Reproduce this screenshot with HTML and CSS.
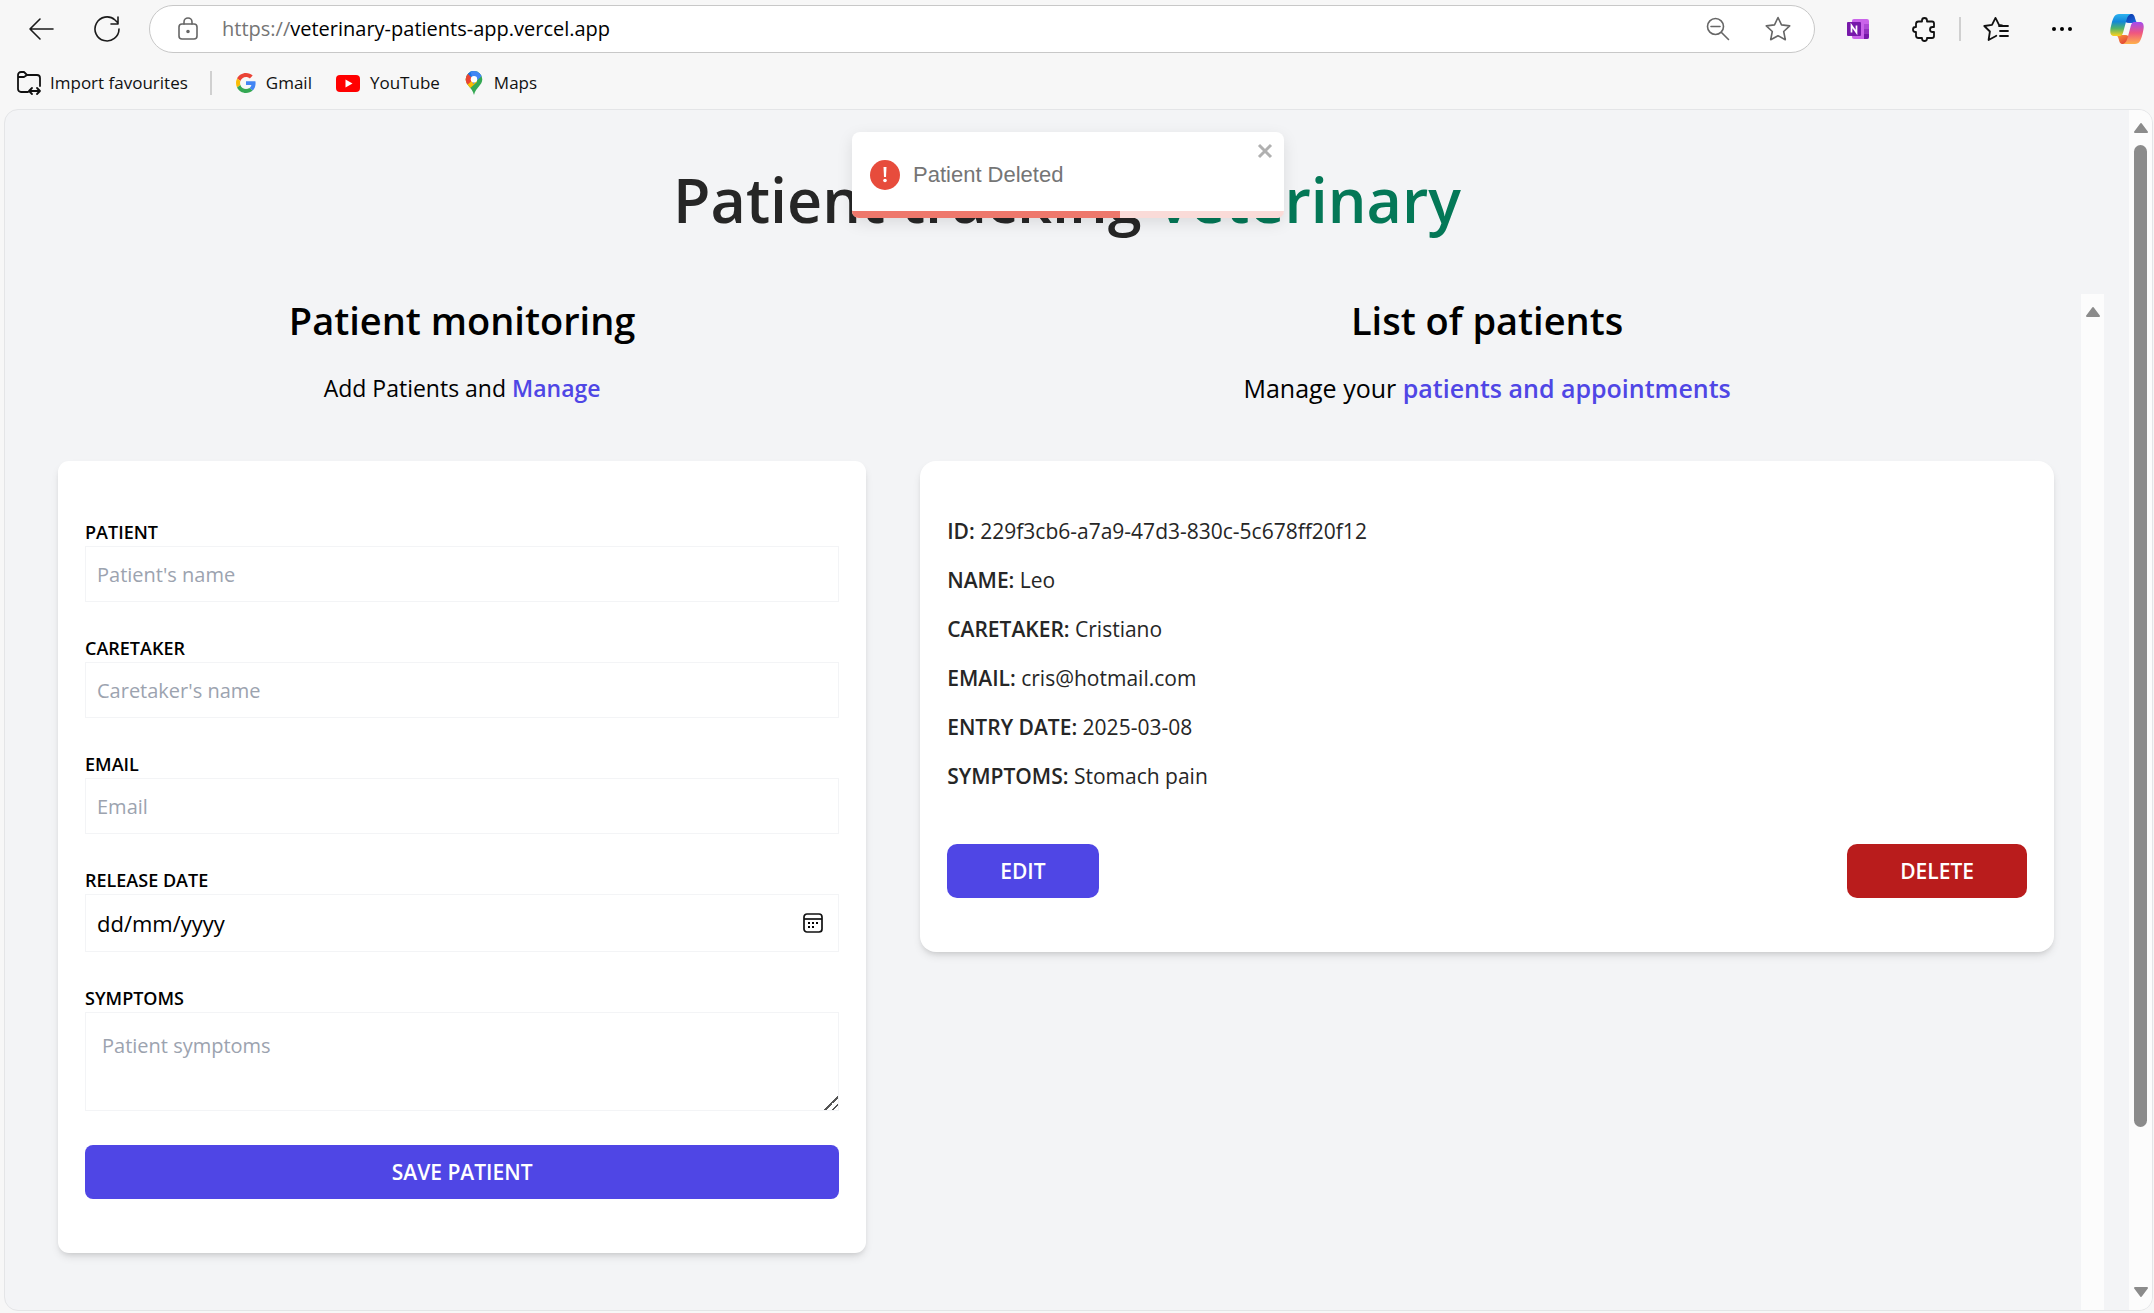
FILE: index.html
```html
<!DOCTYPE html>
<html lang="en-GB">
<head>
<meta charset="utf-8">
<title>Veterinary patients</title>
<link rel="stylesheet" href="styles.css">
</head>
<body>
<div class="browser">
  <header class="chrome">
    <div class="toolbar">
      <button class="icon-btn" aria-label="Back"><svg width="28" height="28" viewBox="0 0 28 28" class="line"><path d="M26 14H3M13 4L3 14l10 10"/></svg></button>
      <button class="icon-btn" aria-label="Refresh"><svg width="28" height="28" viewBox="0 0 28 28" class="line"><path d="M26 14a12 12 0 1 1-4-9l3 3M25 2v7h-7"/></svg></button>
      <div class="address">
        <svg width="24" height="26" viewBox="0 0 24 26" class="line muted"><rect x="3" y="8" width="18" height="15" rx="3"/><path d="M8 8V6a4 4 0 0 1 8 0v2"/><circle cx="12" cy="15.500" r="1" fill="#666"/></svg>
        <div class="url"><span class="scheme">https://</span>veterinary-patients-app.vercel.app</div>
        <button class="icon-btn" aria-label="Zoom out"><svg width="28" height="28" viewBox="0 0 28 28" class="line muted"><circle cx="11.500" cy="11.500" r="8"/><path d="M7 11.500h9M17.500 17.500l7 7"/></svg></button>
        <button class="icon-btn" aria-label="Add to favourites"><svg width="28" height="28" viewBox="0 0 28 28" class="line muted"><path d="M14 2.500l3.500 7.400 8.200 1-6 5.600 1.600 8.200L14 20.700l-7.300 4 1.600-8.200-6-5.600 8.200-1z"/></svg></button>
      </div>
      <div class="tools">
        <button class="icon-btn" aria-label="OneNote"><svg width="28" height="28" viewBox="0 0 28 28"><rect x="8" y="4" width="17" height="20" rx="2" fill="#ca64ea"/><path d="M20 9h5v5h-5z" fill="#ae4bd5"/><path d="M20 14h5v5h-5z" fill="#9332bf"/><path d="M20 19h5v3a2 2 0 0 1-2 2h-3z" fill="#7719aa"/><rect x="3" y="7" width="14" height="14" rx="1" fill="#7719aa"/><path d="M7.500 17.500v-7l5 7v-7" fill="none" stroke="#fff" stroke-width="1.700"/></svg></button>
        <button class="icon-btn" aria-label="Extensions"><svg width="28" height="28" viewBox="0 0 28 28" class="line bold"><path d="M6 9a2.500 2.500 0 0 1 2.500-2.500H12V5.500a2.500 2.500 0 0 1 5 0v1h5a2 2 0 0 1 2 2V12h-1.500a2.500 2.500 0 0 0 0 5H24v4a2 2 0 0 1-2 2h-5v.5a2.500 2.500 0 0 1-5 0V23H8.500A2.500 2.500 0 0 1 6 20.500V17h-.5a2.500 2.500 0 0 1 0-5H6z"/></svg></button>
        <span class="divider"></span>
        <button class="icon-btn" aria-label="Favourites"><svg width="28" height="28" viewBox="0 0 28 28" class="line bold"><path d="M20 10.500l-3-.6-3.500-7-3.500 7-7.700 1.100 5.600 5.500L6.600 25l6.900-3.700.8-.5M17 11h9M18 16h8M18 21h8"/></svg></button>
        <button class="icon-btn" aria-label="Settings and more"><svg width="28" height="28" viewBox="0 0 28 28"><circle cx="6" cy="14" r="2"/><circle cx="14" cy="14" r="2"/><circle cx="22" cy="14" r="2"/></svg></button>
        <button class="icon-btn copilot" aria-label="Copilot"><svg width="34" height="30" viewBox="0 0 34 30">
          <defs>
            <linearGradient id="cool" x1="0" y1="0" x2="0" y2="1"><stop offset="0" stop-color="#2bb2f0"/><stop offset=".35" stop-color="#1287d8"/><stop offset=".65" stop-color="#4fb26a"/><stop offset="1" stop-color="#ffd21c"/></linearGradient>
            <linearGradient id="warm" x1="0" y1="0" x2="0" y2="1"><stop offset="0" stop-color="#a24cf0"/><stop offset=".5" stop-color="#f0567f"/><stop offset="1" stop-color="#ffb24a"/></linearGradient>
            <linearGradient id="deep" x1="0" y1="0" x2="1" y2="1"><stop offset="0" stop-color="#0a2f9e"/><stop offset="1" stop-color="#1c6fe8"/></linearGradient>
            <linearGradient id="hot" x1="0" y1="0" x2="1" y2="1"><stop offset="0" stop-color="#ff9b3c"/><stop offset="1" stop-color="#d92c33"/></linearGradient>
          </defs>
          <path d="M14 0h7c3 0 3.500 2 4.300 5 .7 2.500 1.400 4 3.500 4H19c-3 0-5-2-6-5z" fill="url(#deep)"/>
          <path d="M20 30h-7c-3 0-3.500-2-4.300-5-.7-2.500-1.400-3.500-3.500-4H15c3 0 5 2 6 5z" fill="url(#hot)"/>
          <path d="M22 0H9C4.500 0 3 4 1.500 10 .3 15-1.500 22 4.500 22H9c3 0 3.800-2 4.500-5l3-11C17.500 2.500 19 0 22 0z" fill="url(#cool)"/>
          <path d="M12 30h13c4.500 0 6-4 7.500-10 1.200-5 3-12-3-12H25c-3 0-3.800 2-4.500 5l-3 11c-1 3.500-2.500 6-5.500 6z" fill="url(#warm)"/>
        </svg></button>
      </div>
    </div>
    <nav class="bookmarks">
      <a href="#" class="import"><svg width="26" height="26" viewBox="0 0 26 26" class="line bold"><path d="M12 22H5a3 3 0 0 1-3-3V5a3 3 0 0 1 3-3h3l3 3h10a3 3 0 0 1 3 3v8M2 7h6l3-2M13 21h11M16 18l-3 3 3 3M21 18l3 3-3 3"/></svg>Import favourites</a>
      <span class="divider"></span>
      <a href="#"><svg width="20" height="24" viewBox="0 0 48 48"><path fill="#ea4335" d="M24 9.500c3.540 0 6.710 1.220 9.210 3.600l6.850-6.850C35.900 2.380 30.470 0 24 0 14.620 0 6.510 5.380 2.560 13.220l7.980 6.190C12.430 13.720 17.740 9.500 24 9.500z"/><path fill="#4285f4" d="M46.980 24.550c0-1.570-.15-3.090-.38-4.550H24v9.020h12.940c-.58 2.960-2.260 5.480-4.780 7.180l7.730 6c4.510-4.180 7.090-10.360 7.090-17.650z"/><path fill="#fbbc05" d="M10.530 28.590A14.500 14.500 0 0 1 9.770 24c0-1.600.27-3.140.76-4.590l-7.980-6.190A23.900 23.900 0 0 0 0 24c0 3.880.92 7.540 2.560 10.780z"/><path fill="#34a853" d="M24 48c6.480 0 11.930-2.130 15.890-5.810l-7.730-6c-2.150 1.450-4.920 2.300-8.160 2.300-6.260 0-11.570-4.220-13.470-9.910l-7.980 6.190C6.510 42.620 14.620 48 24 48z"/></svg>Gmail</a>
      <a href="#"><svg width="24" height="18" viewBox="0 0 24 18"><rect width="24" height="17" y="1" rx="4" fill="#f00"/><path d="M9.500 5.500v8l7-4z" fill="#fff"/></svg>YouTube</a>
      <a href="#"><svg width="20" height="26" viewBox="0 0 20 26"><clipPath id="pin"><path d="M10 1a8.300 8.300 0 0 1 8.300 8.300c0 6-6.300 8-8.300 15.700C8 17.300 1.700 15.300 1.700 9.300A8.300 8.300 0 0 1 10 1z"/></clipPath><g clip-path="url(#pin)"><path fill="#34a853" d="M0 0h20v26H0z"/><path fill="#fbbc04" d="M0 8l10-2 3 6-9 8H0z"/><path fill="#ea4335" d="M0 3l4 0 6 6-7 6H0z"/><path fill="#1a73e8" d="M3 0h8l-2 9-6-6z"/><path fill="#4285f4" d="M6 0h14v4L9 14 8 7z"/></g><circle cx="10" cy="9.300" r="3.200" fill="#fff"/></svg>Maps</a>
    </nav>
  </header>

  <div class="viewport">
    <main class="page">
      <h1>Patient tracking <span>veterinary</span></h1>
      <div class="columns">
        <section class="monitor">
          <h2>Patient monitoring</h2>
          <p class="lead">Add Patients and <b>Manage</b></p>
          <form class="card form">
            <div class="field"><label for="patient">PATIENT</label><input id="patient" type="text" placeholder="Patient's name"></div>
            <div class="field"><label for="caretaker">CARETAKER</label><input id="caretaker" type="text" placeholder="Caretaker's name"></div>
            <div class="field"><label for="email">EMAIL</label><input id="email" type="email" placeholder="Email"></div>
            <div class="field"><label for="date">RELEASE DATE</label>
              <div class="date"><input id="date" type="text" placeholder="dd/mm/yyyy"><button type="button" class="icon-btn" aria-label="Open calendar"><svg width="20" height="20" viewBox="0 0 20 20"><rect x="1" y="1" width="18" height="18" rx="3" fill="none" stroke="#111" stroke-width="1.700"/><path d="M1 6h18" stroke="#111" stroke-width="1.700"/><path d="M5 9h2v2H5zM9 9h2v2H9zM13 9h2v2h-2zM5 13h2v2H5zM9 13h2v2H9z"/></svg></button></div>
            </div>
            <div class="field"><label for="symptoms">SYMPTOMS</label><textarea id="symptoms" placeholder="Patient symptoms"></textarea></div>
            <button type="button" class="btn save">SAVE PATIENT</button>
          </form>
        </section>
        <section class="list">
          <div class="list-body">
            <h2>List of patients</h2>
            <p class="lead large">Manage your <b>patients and appointments</b></p>
            <article class="card patient">
              <dl>
                <div><dt>ID:</dt> <dd>229f3cb6-a7a9-47d3-830c-5c678ff20f12</dd></div>
                <div><dt>NAME:</dt> <dd>Leo</dd></div>
                <div><dt>CARETAKER:</dt> <dd>Cristiano</dd></div>
                <div><dt>EMAIL:</dt> <dd>cris@hotmail.com</dd></div>
                <div><dt>ENTRY DATE:</dt> <dd>2025-03-08</dd></div>
                <div><dt>SYMPTOMS:</dt> <dd>Stomach pain</dd></div>
              </dl>
              <div class="actions">
                <button type="button" class="btn">EDIT</button>
                <button type="button" class="btn danger">DELETE</button>
              </div>
            </article>
          </div>
          <div class="scrollbar" aria-hidden="true"><svg width="16" height="12" viewBox="0 0 16 12"><path d="M8 2l6 8H2z"/></svg></div>
        </section>
      </div>
    </main>
    <div class="scrollbar" aria-hidden="true">
      <svg width="16" height="12" viewBox="0 0 16 12"><path d="M8 2l6 8H2z"/></svg>
      <div class="track"><div class="thumb"></div></div>
      <svg width="16" height="12" viewBox="0 0 16 12"><path d="M8 10L2 2h12z"/></svg>
    </div>
    <div class="toast" role="alert">
      <svg width="30" height="30" viewBox="0 0 30 30"><circle cx="15" cy="15" r="15" fill="#e74c3c"/><path d="M13.500 7h3l-.5 10h-2z" fill="#fff"/><circle cx="15" cy="20.500" r="1.800" fill="#fff"/></svg>
      <span>Patient Deleted</span>
      <button class="icon-btn close" aria-label="Close"><svg width="16" height="16" viewBox="0 0 16 16"><path d="M2 2l12 12M14 2L2 14" stroke="#b0b0b0" stroke-width="3"/></svg></button>
      <div class="progress"><div class="bar" style="width:62%"></div></div>
    </div>
  </div>
</div>
</body>
</html>
```
FILE: styles.css
```css
* { box-sizing: border-box; margin: 0; }

body { font-family: "Open Sans", "Noto Sans", sans-serif; color: #000; background: #f7f7f7; }

button, input, textarea { font: inherit; color: inherit; }

svg { display: block; flex: none; }

.browser { display: flex; flex-direction: column; height: 100vh; padding: 0 1px 2px 4px; }

.icon-btn { display: flex; padding: 0; border: 0; background: none; }

.line { fill: none; stroke: #1b1b1b; stroke-width: 1.6; stroke-linecap: round; stroke-linejoin: round; }
.line.bold { stroke-width: 1.8; stroke: #111; }
.line.muted { stroke: #666; }

.divider { width: 2px; height: 24px; background: #d0d0d0; }

/* Browser bars */
.toolbar { display: flex; align-items: center; height: 58px; padding: 0 9px 0 23px; gap: 38px; }
.address {
  flex: 1; display: flex; align-items: center; height: 48px; gap: 32px;
  margin-left: -10px; padding: 0 22px 0 26px;
  border: 1px solid #c8c8c8; border-radius: 24px; background: #fff;
}
.url { flex: 1; margin-left: -10px; font-size: 20px; line-height: 28px; }
.scheme { color: #757575; }
.tools { display: flex; align-items: center; gap: 38px; margin-left: -9px; }
.tools .divider { margin: 0 -17px; }
.copilot { margin-left: -4px; }
.bookmarks { display: flex; align-items: center; height: 51px; padding: 0 12px 2px; gap: 24px; }
.bookmarks a { display: flex; align-items: center; gap: 10px; font-size: 17px; line-height: 24px; color: #111; text-decoration: none; }
.bookmarks .import { gap: 8px; margin-right: -2px; }

/* Page frame */
.viewport {
  position: relative; flex: 1; min-height: 0; display: flex; overflow: hidden;
  border: 1px solid #e4e5e7; border-radius: 14px; background: #f3f4f6;
}
.page { flex: 1; display: flex; flex-direction: column; }
.scrollbar { display: flex; flex-direction: column; align-items: center; width: 23px; padding: 12px 0; background: #fcfcfc; fill: #8b8b8b; stroke: #8b8b8b; stroke-width: 2; stroke-linejoin: round; }
.track { flex: 1; width: 13px; padding: 11px 0 12px; }
.thumb { height: 87%; border-radius: 7px; background: #8b8b8b; }

h1 { padding-top: 48px; font-size: 61px; line-height: 84px; font-weight: 600; text-align: center; color: #262626; }
h1 span { color: #047857; }
.columns { flex: 1; display: grid; grid-template-columns: 809fr 1239fr; margin-top: 52px; padding: 0 25px 0 53px; }
.list { display: flex; padding-left: 54px; }
.list-body { flex: 1; padding-right: 27px; }

h2 { font-size: 38px; line-height: 52px; font-weight: 600; text-align: center; }
.lead { margin: 26px 0 56px; font-size: 23px; line-height: 33px; text-align: center; }
.lead.large { font-size: 25px; }
.lead b { font-weight: 600; color: #4f46e5; }

.card { padding: 54px 27px; border-radius: 11px; background: #fff; box-shadow: 0 5px 8px -1px #0000001a, 0 3px 5px -2px #0000001a; }

/* Patient form */
.form { padding-top: 57px; }
.field { margin-bottom: 32px; }
.field label { display: block; font-size: 18px; line-height: 28px; font-weight: 600; }
.field input, .field textarea { display: block; width: 100%; height: 56px; padding: 0 11px; border: 1px solid #f3f4f6; background: #fff; font-size: 20px; line-height: 32px; outline: 0; }
.field textarea { height: 99px; margin-bottom: 34px; padding: 17px 16px; }
textarea::-webkit-resizer { background: linear-gradient(135deg, transparent 53%, #555 53% 60%, transparent 60% 77%, #555 77% 84%, transparent 84%); }
::placeholder { color: #9ca3af; opacity: 1; }
.field .date { display: flex; align-items: center; height: 58px; padding-right: 15px; border: 1px solid #f3f4f6; }
.field .date input { flex: 1; border: 0; font-size: 22px; }
.date ::placeholder { color: #000; }

.btn { height: 54px; padding: 0 53px; border: 0; border-radius: 10px; background: #4f46e5; color: #fff; font-size: 21px; line-height: 32px; font-weight: 600; }
.btn.danger { background: #b91c1c; }
.save { display: block; width: 100%; border-radius: 8px; }

/* Patient card */
.patient { border-radius: 16px; }
dl { display: grid; gap: 16px; font-size: 21px; line-height: 33px; color: #262626; }
dt, dd { display: inline; }
dt { font-weight: 600; }
.actions { display: flex; justify-content: space-between; margin-top: 51px; }

/* Notification */
.toast {
  position: absolute; top: 22px; left: 847px; width: 432px; height: 86px;
  display: flex; align-items: center; gap: 13px; padding: 0 18px;
  border-radius: 8px; background: #fff; box-shadow: 0 5px 16px #0000001a;
  font-family: "Liberation Sans", Arial, sans-serif; font-size: 22px; line-height: 32px; color: #757575;
}
.close { position: absolute; top: 11px; right: 11px; }
.progress { position: absolute; left: 0; right: 0; bottom: 0; height: 7px; overflow: hidden; border-radius: 0 0 8px 8px; background: #fadbd8; }
.bar { height: 7px; background: #ee786c; }
```
